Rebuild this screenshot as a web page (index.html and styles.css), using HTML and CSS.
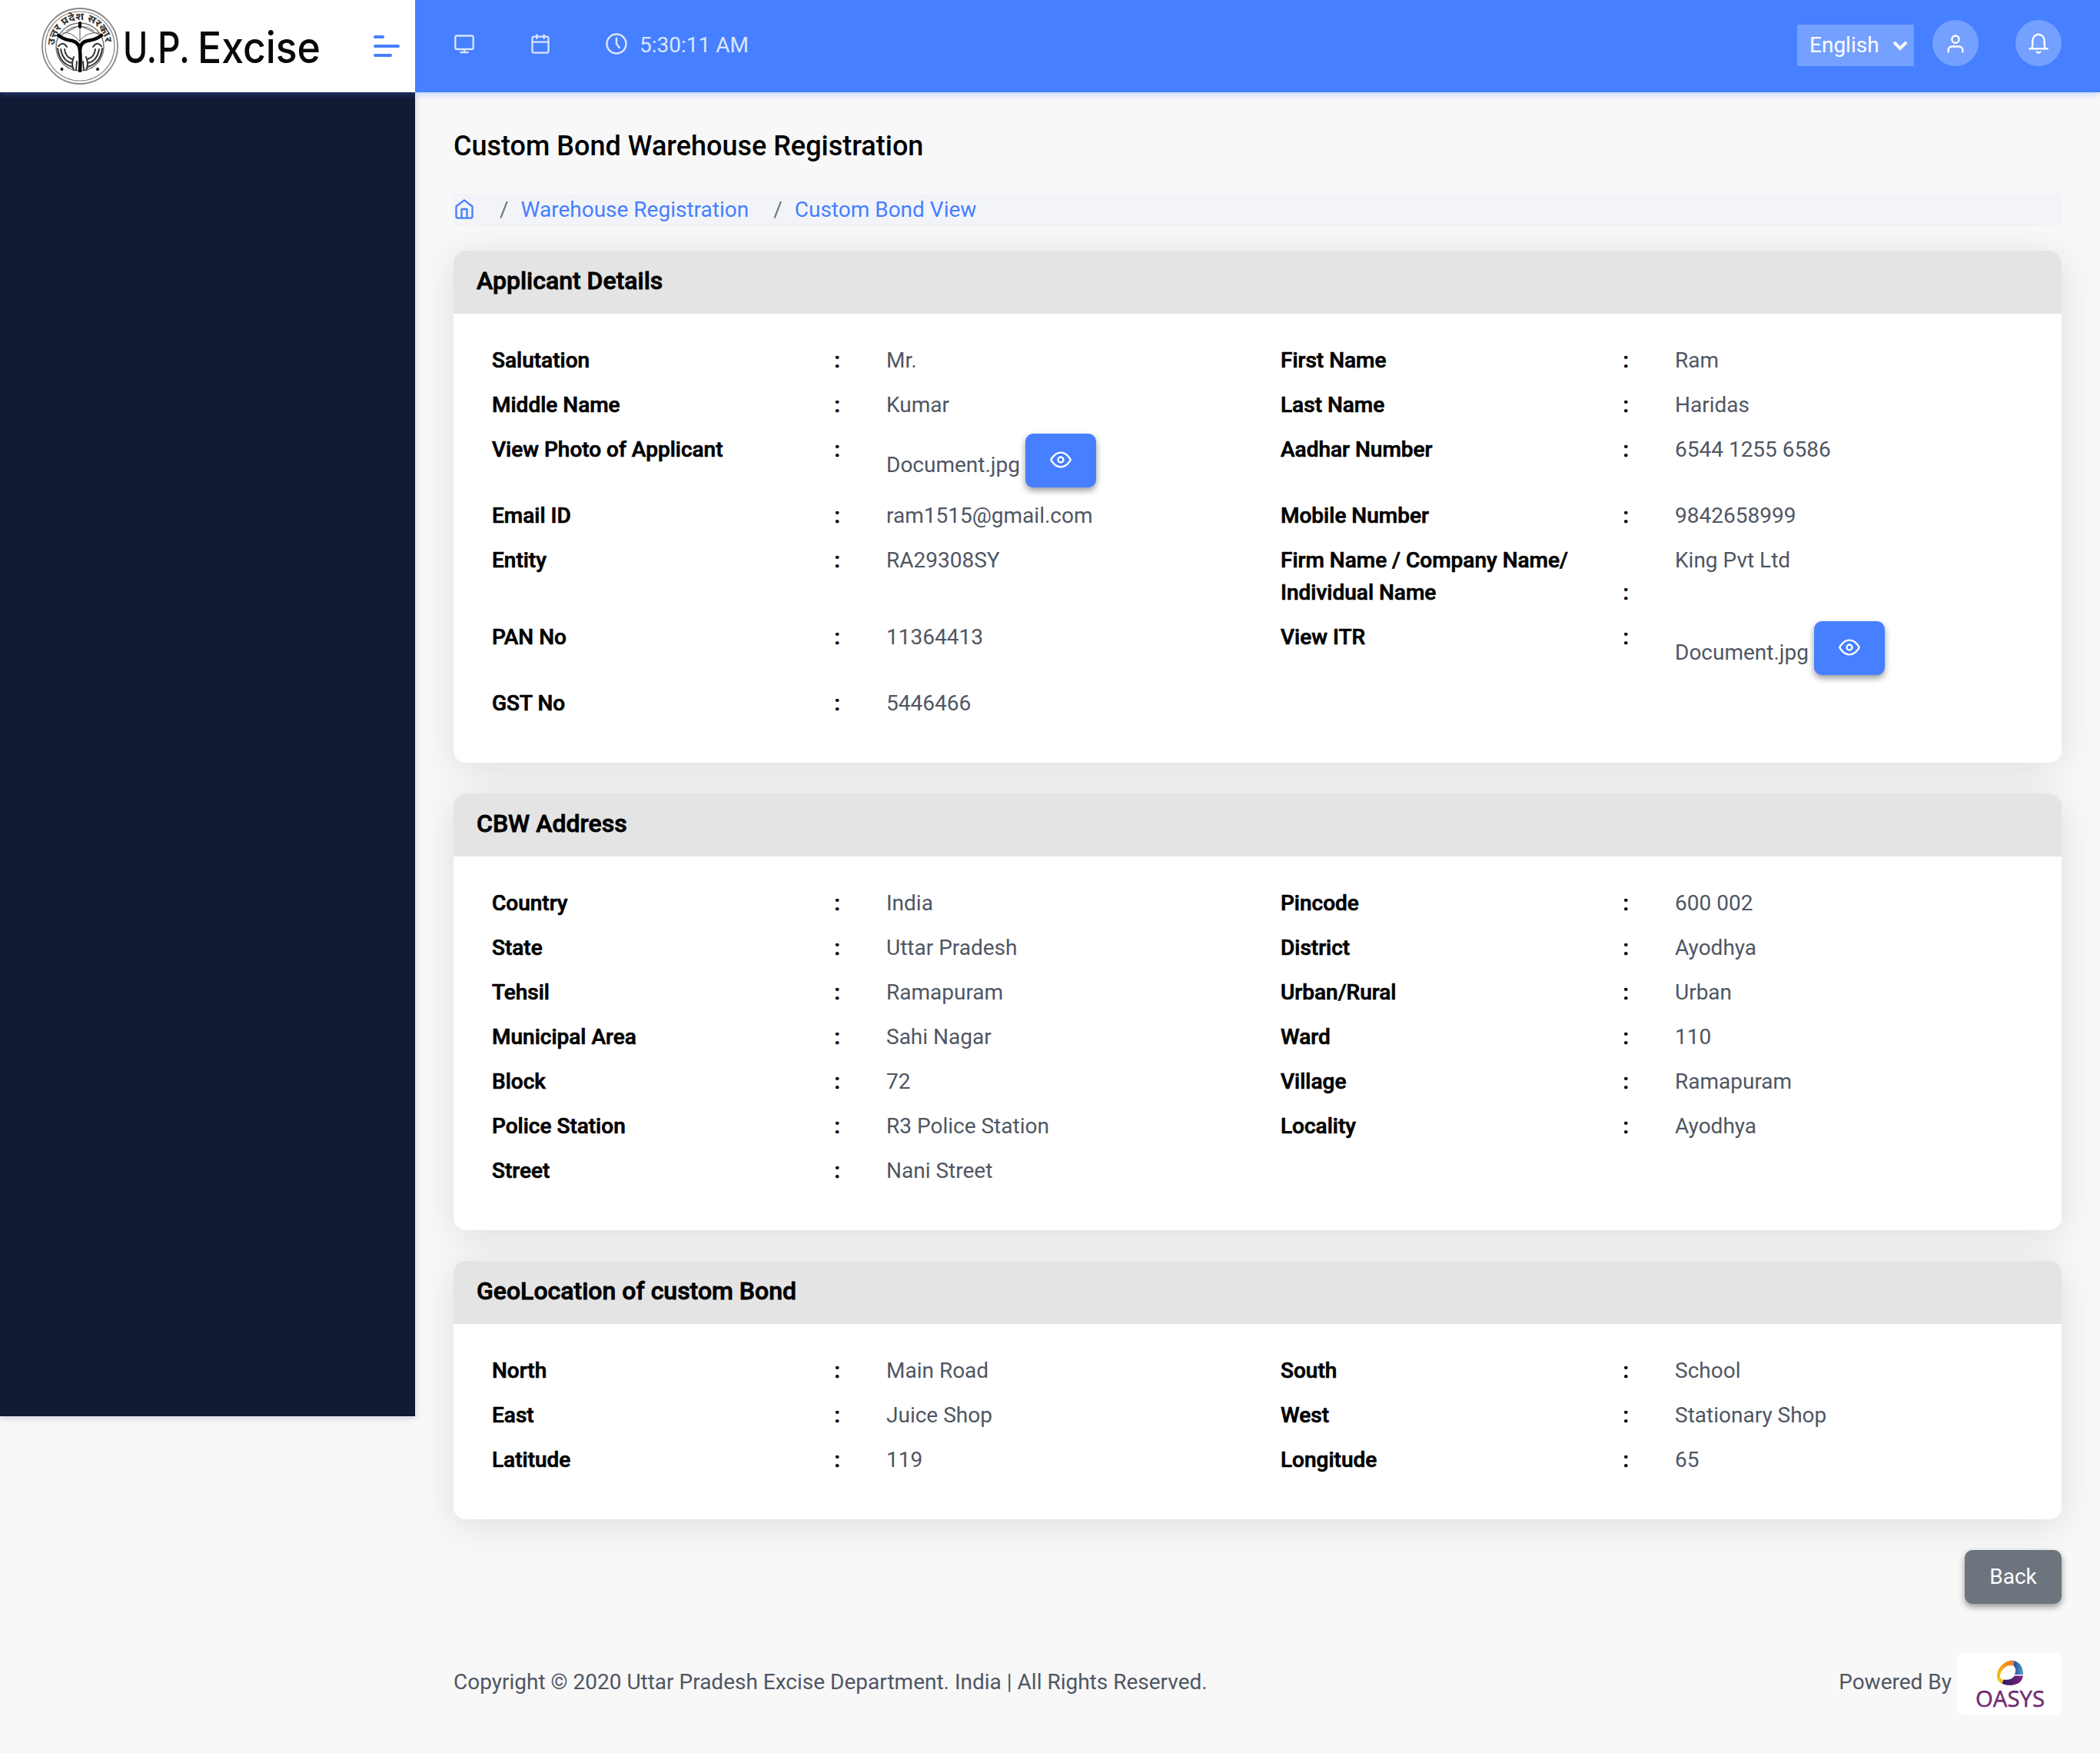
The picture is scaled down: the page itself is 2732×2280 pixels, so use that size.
FILE: index.html
```html
<!DOCTYPE html>
<html lang="en">
<head>
<meta charset="utf-8">
<title>Custom Bond Warehouse Registration</title>
<link rel="stylesheet" href="styles.css">
</head>
<body>
<header class="topbar">
  <div class="brand">
    <svg class="seal" viewBox="0 0 100 100">
      <g fill="none" stroke="#888">
        <circle cx="50" cy="50" r="49" stroke-width="1.8"/>
        <circle cx="50" cy="50" r="45" stroke-width="1.2"/>
        <circle cx="50" cy="51" r="31" stroke="#777" stroke-width="1.5"/>
      </g>
      <path id="arc" d="M17 49A33 33 0 0 1 83 49" fill="none"/>
      <text class="seal-text"><textPath href="#arc" textLength="100" lengthAdjust="spacingAndGlyphs">उत्तर प्रदेश सरकार</textPath></text>
      <g fill="none" stroke="#555" stroke-width="1">
        <path d="M25 36L49 23L77 36M28 33Q38 30 49 43Q62 30 74 33M50 22V44M32 30Q50 18 68 30"/>
      </g>
      <g fill="none" stroke="#000">
        <path d="M22 36Q30 42 40 43Q50 46 50 56Q51 65 50 82M78 36Q70 42 60 43Q50 45 50 56" stroke-width="4.5"/>
        <path d="M50 20v5" stroke-width="4"/>
      </g>
      <g fill="none" stroke="#333" stroke-width="2">
        <path d="M21 53Q23 72 40 77M25 54Q28 70 40 72M30 54Q31 64 40 67M22 50Q28 43 33 51M79 53Q77 72 60 77M75 54Q72 70 60 72M70 54Q69 64 60 67M78 50Q72 43 67 51M42 64Q38 74 42 81M58 64Q62 74 58 81M46 70L45 81M54 70L55 81"/>
      </g>
      <circle cx="26.500" cy="80" r="2"/><circle cx="73" cy="80" r="2"/>
    </svg>
    <svg class="brand-name" viewBox="0 0 260 70">
      <text x="0" y="52" textLength="44" lengthAdjust="spacingAndGlyphs">U.</text>
      <text x="45" y="52" textLength="42" lengthAdjust="spacingAndGlyphs">P.</text>
      <text x="97" y="52" textLength="160" lengthAdjust="spacingAndGlyphs">Excise</text>
    </svg>
    <svg class="menu" viewBox="0 0 34 28"><path d="M2 2h10M2 14h30M2 26h20"/></svg>
  </div>
  <div class="bar">
    <svg class="icon monitor" viewBox="0 0 24 24"><rect x="2" y="3" width="20" height="15" rx="2"/><path d="M12 18v3.500M8 21.500h8"/></svg>
    <svg class="icon calendar" viewBox="0 0 24 24"><rect x="3" y="4" width="18" height="18" rx="2"/><path d="M16 2v4M8 2v4M3 10h18"/></svg>
    <svg class="icon clock" viewBox="0 0 24 24"><circle cx="12" cy="12" r="10"/><path d="M12 6v6l3 4"/></svg>
    <span class="time">5:30:11 AM</span>
    <div class="lang">English<svg viewBox="0 0 20 14"><path d="M2 3l8 8 8-8"/></svg></div>
    <div class="round"><svg class="icon" viewBox="0 0 24 24"><path d="M20 21v-2a4 4 0 0 0-4-4H8a4 4 0 0 0-4 4v2"/><circle cx="12" cy="7" r="4"/></svg></div>
    <div class="round bell"><svg class="icon" viewBox="0 0 24 24"><path d="M2 17.500h20M4.500 17c1-1 1-3 1-9a6.500 6.500 0 0 1 13 0c0 6 0 8 1 9M10 21q2 2 4 0"/></svg></div>
  </div>
</header>
<div class="shell">
  <aside class="sidebar"></aside>
  <main class="main">
    <h1 class="title">Custom Bond Warehouse Registration</h1>
    <nav class="crumbs">
      <svg viewBox="0 0 24 24"><path d="M3 9l9-7 9 7v11a2 2 0 0 1-2 2H5a2 2 0 0 1-2-2zM9 22V12h6v10"/></svg>
      <i>/</i><a>Warehouse Registration</a><i class="sep2">/</i><a>Custom Bond View</a>
    </nav>

    <section class="card">
      <h2>Applicant Details</h2>
      <div class="fields">
        <div class="label">Salutation<b>:</b></div><div class="value">Mr.</div>
        <div class="label">First Name<b>:</b></div><div class="value">Ram</div>
        <div class="label">Middle Name<b>:</b></div><div class="value">Kumar</div>
        <div class="label">Last Name<b>:</b></div><div class="value">Haridas</div>
        <div class="label">View Photo of Applicant<b>:</b></div>
        <div class="value doc"><span>Document.jpg</span><span class="view"><svg viewBox="0 0 24 24"><path d="M1 12s4-8 11-8 11 8 11 8-4 8-11 8-11-8-11-8z"/><circle cx="12" cy="12" r="3"/></svg></span></div>
        <div class="label">Aadhar Number<b>:</b></div><div class="value">6544 1255 6586</div>
        <div class="label">Email ID<b>:</b></div><div class="value">ram1515@gmail.com</div>
        <div class="label">Mobile Number<b>:</b></div><div class="value">9842658999</div>
        <div class="label">Entity<b>:</b></div><div class="value">RA29308SY</div>
        <div class="label two"><span>Firm Name / Company Name/<br>Individual Name</span><b>:</b></div><div class="value">King Pvt Ltd</div>
        <div class="label">PAN No<b>:</b></div><div class="value">11364413</div>
        <div class="label">View ITR<b>:</b></div>
        <div class="value doc"><span>Document.jpg</span><span class="view"><svg viewBox="0 0 24 24"><path d="M1 12s4-8 11-8 11 8 11 8-4 8-11 8-11-8-11-8z"/><circle cx="12" cy="12" r="3"/></svg></span></div>
        <div class="label">GST No<b>:</b></div><div class="value">5446466</div>
      </div>
    </section>

    <section class="card">
      <h2>CBW Address</h2>
      <div class="fields">
        <div class="label">Country<b>:</b></div><div class="value">India</div>
        <div class="label">Pincode<b>:</b></div><div class="value">600 002</div>
        <div class="label">State<b>:</b></div><div class="value">Uttar Pradesh</div>
        <div class="label">District<b>:</b></div><div class="value">Ayodhya</div>
        <div class="label">Tehsil<b>:</b></div><div class="value">Ramapuram</div>
        <div class="label">Urban/Rural<b>:</b></div><div class="value">Urban</div>
        <div class="label">Municipal Area<b>:</b></div><div class="value">Sahi Nagar</div>
        <div class="label">Ward<b>:</b></div><div class="value">110</div>
        <div class="label">Block<b>:</b></div><div class="value">72</div>
        <div class="label">Village<b>:</b></div><div class="value">Ramapuram</div>
        <div class="label">Police Station<b>:</b></div><div class="value">R3 Police Station</div>
        <div class="label">Locality<b>:</b></div><div class="value">Ayodhya</div>
        <div class="label">Street<b>:</b></div><div class="value">Nani Street</div>
      </div>
    </section>

    <section class="card">
      <h2>GeoLocation of custom Bond</h2>
      <div class="fields">
        <div class="label">North<b>:</b></div><div class="value">Main Road</div>
        <div class="label">South<b>:</b></div><div class="value">School</div>
        <div class="label">East<b>:</b></div><div class="value">Juice Shop</div>
        <div class="label">West<b>:</b></div><div class="value">Stationary Shop</div>
        <div class="label">Latitude<b>:</b></div><div class="value">119</div>
        <div class="label">Longitude<b>:</b></div><div class="value">65</div>
      </div>
    </section>

    <div class="actions"><span class="back">Back</span></div>
    <footer class="footer">
      <span>Copyright © 2020 Uttar Pradesh Excise Department. India | All Rights Reserved.</span>
      <span class="powered">Powered By</span>
      <svg class="oasys" viewBox="0 0 136 80">
        <defs>
          <linearGradient id="gold" x1="0" y1="1" x2="1" y2="0"><stop offset="0" stop-color="#fbd20a"/><stop offset="1" stop-color="#ee7623"/></linearGradient>
          <linearGradient id="blue"><stop offset="0" stop-color="#2b4b9b"/><stop offset="1" stop-color="#4d9fce"/></linearGradient>
          <linearGradient id="plum"><stop offset="0" stop-color="#2c1a5c"/><stop offset="1" stop-color="#7d2482"/></linearGradient>
        </defs>
        <path fill="url(#gold)" d="M74 10V17C66 13 56 22 56 30Q56 34 60 35L58 40Q51 36 52 28C53 18 64 8 74 10z"/>
        <path fill="url(#blue)" d="M74 10Q86 13 86 28H75Q78 21 74 17z"/>
        <path fill="url(#plum)" d="M86 29.500Q84 41 70 42Q63 42 58.500 39.500L60.500 34.500Q70 36 75 29.500z"/>
        <text x="24" y="70" textLength="90" lengthAdjust="spacingAndGlyphs">OASYS</text>
      </svg>
    </footer>
  </main>
</div>
</body>
</html>
```
FILE: styles.css
```css
* { box-sizing: border-box; }
body { margin: 0; background: #f8f8f8; font: 400 28px/42px Roboto, sans-serif; color: #4f5663; }
svg { display: block; flex: none; fill: none; stroke-linecap: round; stroke-linejoin: round; }

.topbar { position: relative; z-index: 2; display: flex; height: 120px; box-shadow: 0 2px 8px rgba(70, 127, 255, .35); }
.brand { display: flex; width: 540px; padding: 10px 0 0 53px; background: #fff; }
.seal { width: 102px; height: 100px; overflow: visible; fill: #111; }
.seal-text { font: 700 13px "Noto Sans", "Noto Sans Devanagari", sans-serif; fill: #333; }
.brand-name { width: 260px; height: 70px; margin: 20px 0 0 5px; overflow: visible; font: 500 56px Inter, sans-serif; fill: #080808; }
.menu { width: 34px; height: 28px; margin: 36px 0 0 66px; stroke: #467fff; stroke-width: 4; }

.bar { flex: 1; display: flex; padding: 0 50px; background: #467fff; color: #dae5ff; }
.icon { width: 28px; height: 28px; margin-top: 43px; stroke: #dae5ff; stroke-width: 2; }
.calendar { margin-left: 71px; }
.clock { width: 30px; height: 30px; margin: 42px 0 0 70px; }
.time { margin: 38px 0 0 15px; }
.lang { display: flex; width: 152px; height: 54px; margin: 32px 0 0 auto; padding: 6px 8px 0 16px; justify-content: space-between; background: #74a0ff; color: #fff; }
.lang svg { width: 20px; height: 14px; margin-top: 14px; stroke: #fff; stroke-width: 4; stroke-linecap: butt; stroke-linejoin: miter; }
.round { width: 60px; height: 60px; margin: 26px 0 0 24px; padding: 17px 16px; border-radius: 50%; background: #74a0ff; }
.round .icon { margin: 0; stroke: #fff; }
.bell { margin-left: 48px; }

.shell { display: flex; height: 2160px; align-items: flex-start; }
.sidebar { width: 540px; height: 1722px; background: #111b33; box-shadow: 0 2px 8px rgba(70, 80, 160, .25); }
.main { flex: 1; padding: 0 50px; }
.title { margin: 43px 0 0; font-size: 36px; line-height: 54px; font-weight: 500; color: #000; }
.crumbs { display: flex; height: 42px; margin: 35px 0 32px; background: #f3f4fa; color: #467fff; }
.crumbs svg { width: 28px; height: 28px; margin: 6px 32px 0 0; stroke: #467fff; stroke-width: 2; }
.crumbs i { margin-right: 16px; font-style: normal; color: #6c757d; }
.crumbs .sep2 { margin-left: 32px; }

.card { margin-bottom: 40px; overflow: hidden; border-radius: 16px; background: #fff; box-shadow: 0 8px 50px rgba(0, 0, 0, .11); }
.card h2 { margin: 0; height: 82px; padding: 15px 30px; background: #e4e4e4; font-size: 32px; line-height: 48px; font-weight: 500; color: #000; -webkit-text-stroke: .8px #000; }
.fields { display: grid; grid-template-columns: repeat(4, 1fr); padding: 40px 20px; }
.label, .value { padding: 0 30px 16px; }
.label { display: flex; justify-content: space-between; font-weight: 500; color: #000; -webkit-text-stroke: .7px #000; }
.label b { font-weight: 500; }
.two { align-items: flex-end; }
.doc { display: flex; }
.doc > span:first-child { padding-top: 20px; height: 62px; }
.view { width: 92px; height: 70px; margin-left: 7px; padding: 20px 32px; border-radius: 10px; background: #467fff; box-shadow: 0 4px 8px rgba(0, 0, 0, .4); }
.view svg { width: 28px; height: 28px; stroke: #fff; stroke-width: 2; }

.actions { display: flex; justify-content: flex-end; }
.back { width: 126px; height: 70px; padding-top: 14px; border-radius: 10px; background: #6c757d; color: #fff; text-align: center; box-shadow: 0 4px 8px rgba(0, 0, 0, .4); }
.footer { display: flex; margin-top: 64px; align-items: flex-start; }
.footer span { padding-top: 17px; }
.powered { margin-left: auto; }
.oasys { width: 136px; height: 80px; margin-left: 7px; border-radius: 8px; background: #fff; }
.oasys text { font: 400 30px "Open Sans", sans-serif; fill: #702a72; stroke: #702a72; stroke-width: .5; }
```
